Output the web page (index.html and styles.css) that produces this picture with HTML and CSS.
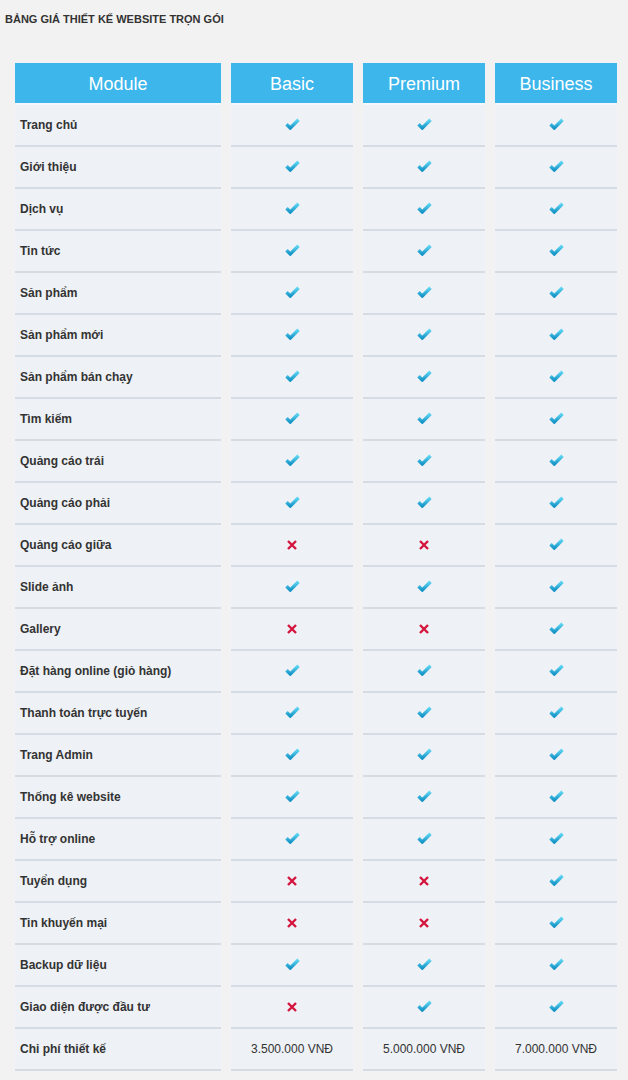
FILE: index.html
```html
<!DOCTYPE html>
<html lang="vi">
<head>
<meta charset="utf-8">
<title>Bảng giá thiết kế website trọn gói</title>
<link rel="stylesheet" href="styles.css">
</head>
<body>
<svg width="0" height="0" class="defs" aria-hidden="true">
  <defs>
    <linearGradient id="ck" x1="0" y1="0" x2="0" y2="1">
      <stop offset="0" stop-color="#5fd6f4"/>
      <stop offset="1" stop-color="#1696c8"/>
    </linearGradient>
    <symbol id="yes" viewBox="0 0 15 12">
      <path d="M1.5 6.3 L5.3 10 L13.5 1.8" fill="none" stroke="url(#ck)" stroke-width="3.4" stroke-linejoin="miter" stroke-linecap="butt"/>
    </symbol>
    <symbol id="no" viewBox="0 0 10 10">
      <path d="M1 1 L9 9 M9 1 L1 9" fill="none" stroke="#d4143c" stroke-width="2.4"/>
    </symbol>
  </defs>
</svg>
<h1 class="title">BẢNG GIÁ THIẾT KẾ WEBSITE TRỌN GÓI</h1>
<div class="pricing" id="pricing">
  <div class="hd">Module</div><div class="hd">Basic</div><div class="hd">Premium</div><div class="hd">Business</div>
</div>
<script>
var rows = [
 ["Trang chủ",1,1,1],["Giới thiệu",1,1,1],["Dịch vụ",1,1,1],["Tin tức",1,1,1],
 ["Sản phẩm",1,1,1],["Sản phẩm mới",1,1,1],["Sản phẩm bán chạy",1,1,1],["Tìm kiếm",1,1,1],
 ["Quảng cáo trái",1,1,1],["Quảng cáo phải",1,1,1],["Quảng cáo giữa",0,0,1],["Slide ảnh",1,1,1],
 ["Gallery",0,0,1],["Đặt hàng online (giỏ hàng)",1,1,1],["Thanh toán trực tuyến",1,1,1],
 ["Trang Admin",1,1,1],["Thống kê website",1,1,1],["Hỗ trợ online",1,1,1],["Tuyển dụng",0,0,1],
 ["Tin khuyến mại",0,0,1],["Backup dữ liệu",1,1,1],["Giao diện được đầu tư",0,1,1],
 ["Chi phí thiết kế","3.500.000 VNĐ","5.000.000 VNĐ","7.000.000 VNĐ"]
];
var box = document.getElementById("pricing");
var html = "";
rows.forEach(function(r){
  html += '<div class="cell label">' + r[0] + '</div>';
  for (var i = 1; i < 4; i++) {
    var v = r[i];
    if (v === 1) html += '<div class="cell"><svg class="ic yes"><use href="#yes"/></svg></div>';
    else if (v === 0) html += '<div class="cell"><svg class="ic no"><use href="#no"/></svg></div>';
    else html += '<div class="cell price">' + v + '</div>';
  }
});
box.insertAdjacentHTML("beforeend", html);
</script>
</body>
</html>
```
FILE: styles.css
```css
html, body {
  margin: 0;
  padding: 0;
  background: #f2f2f2;
  font-family: "Liberation Sans", Arial, sans-serif;
  color: #333;
}
.defs { position: absolute; width: 0; height: 0; }
.title {
  margin: 0;
  padding: 12px 0 0 5px;
  height: 63px;
  box-sizing: border-box;
  font-size: 11px;
  line-height: 14px;
  font-weight: bold;
  color: #333;
}
.pricing {
  display: grid;
  grid-template-columns: 206px 122px 122px 122px;
  column-gap: 10px;
  margin-left: 15px;
}
.hd {
  height: 42px;
  box-sizing: border-box;
  padding-top: 2px;
  background: #3cb6eb;
  border-bottom: 2px solid #f5f7fa;
  color: #fff;
  font-size: 18px;
  display: flex;
  align-items: center;
  justify-content: center;
}
.cell {
  height: 42px;
  box-sizing: border-box;
  background: #eef1f5;
  border-bottom: 2px solid #d6dce3;
  display: flex;
  align-items: center;
  justify-content: center;
  font-size: 12px;
}
.cell.label {
  justify-content: flex-start;
  padding-left: 5px;
  font-weight: bold;
}
.price { color: #333; }
.ic.yes { width: 15px; height: 12px; margin-top: -2px; }
.ic.no { width: 10px; height: 10px; }
```
